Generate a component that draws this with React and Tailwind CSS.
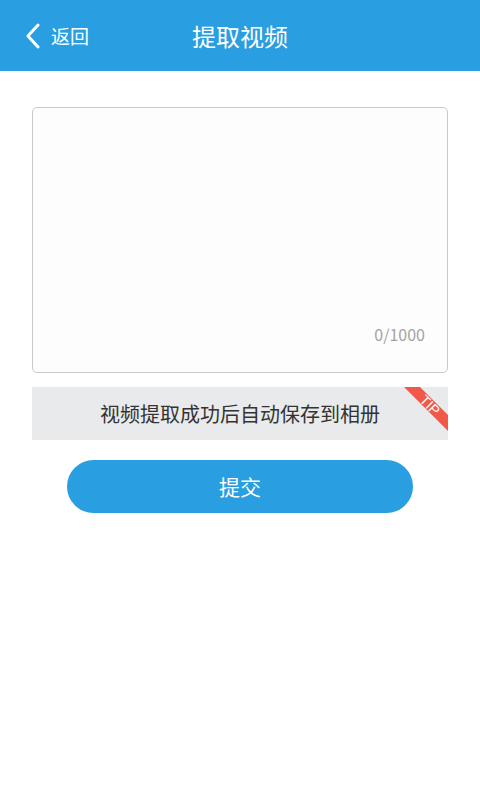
export default function App() {
  return (
    <div
      className="w-[480px] h-[800px] bg-white flex flex-col"
      style={{ fontFamily: '"Noto Sans CJK SC", "Noto Sans", sans-serif' }}
    >
      <header className="relative h-[71px] bg-[#299ee0] flex items-center justify-center text-white">
        <div className="absolute left-[25px] top-0 h-full flex items-center gap-[9px]">
          <svg width="17" height="26" viewBox="0 0 17 26" fill="none">
            <path d="M13 2 L3 13 L13 24" stroke="white" strokeWidth="3" strokeLinecap="round" strokeLinejoin="round" />
          </svg>
          <span className="text-[19px] leading-none">返回</span>
        </div>
        <h1 className="text-[24px] leading-none">提取视频</h1>
      </header>

      <main className="px-[32px] pt-[36px] flex flex-col">
        <div className="h-[266px] border border-[#c9c9c9] rounded-[5px] bg-[#fdfdfd] flex flex-col justify-end items-end px-[22px] pb-[30px]">
          <span className="text-[16px] leading-none text-[#a3a3a3]">0/1000</span>
        </div>

        <div className="relative mt-[14px] h-[53px] bg-[#e9eaeb] flex items-center justify-center overflow-hidden">
          <span className="text-[20px] text-[#333] leading-none">视频提取成功后自动保存到相册</span>
          <div className="absolute top-0 right-0 w-[44px] h-[44px]">
            <svg width="44" height="44" viewBox="0 0 44 44" className="absolute inset-0">
              <polygon points="0,0 16,0 44,28 44,44" fill="#f0584a" />
            </svg>
            <div className="absolute left-[6px] top-[8px] w-[40px] h-[20px] flex items-center justify-center rotate-45">
              <span className="text-[14px] text-white leading-none" style={{ fontFamily: '"Liberation Sans", sans-serif' }}>
                TIP
              </span>
            </div>
          </div>
        </div>

        <div className="px-[35px] mt-[20px]">
          <button className="w-full h-[53px] rounded-full bg-[#299ee0] text-white text-[21px] leading-none">
            提交
          </button>
        </div>
      </main>
    </div>
  );
}
